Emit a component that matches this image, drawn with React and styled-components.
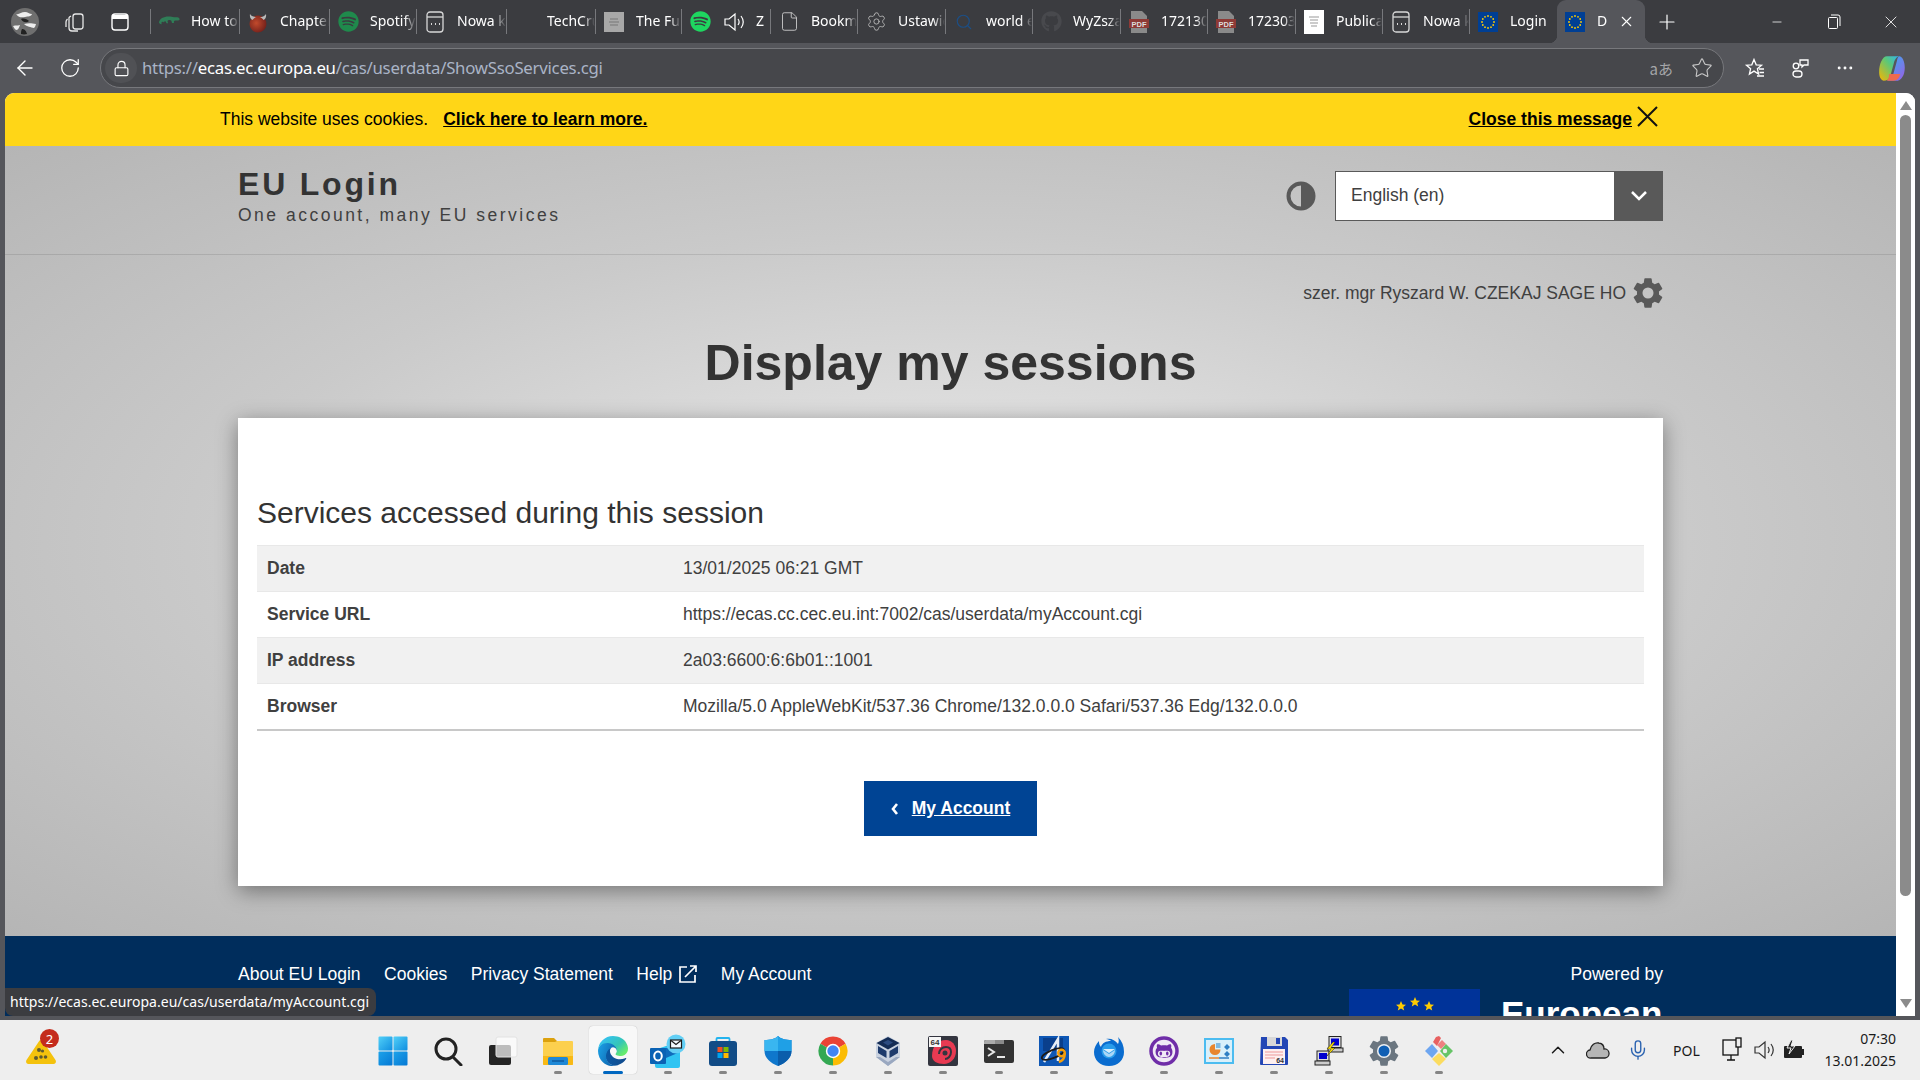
import React from 'react';
import styled, { createGlobalStyle } from 'styled-components';
import { FaSpotify, FaGithub, FaGithubAlt } from 'react-icons/fa';
import {
  ArrowLeft, RotateCw, Lock, Star, Plus, X, Minus, Search, Settings, File, ChevronUp, Mic, Ellipsis,
} from 'lucide-react';

const GlobalStyle = createGlobalStyle`
  html, body {
    margin: 0;
    padding: 0;
    height: 100%;
    overflow: hidden;
  }
  body {
    font-family: "Liberation Sans", Arial, sans-serif;
  }
  #root {
    height: 100%;
  }
  * {
    box-sizing: border-box;
  }
`;

const Screen = styled.div`
  width: 1920px;
  height: 1080px;
  display: flex;
  flex-direction: column;
  background: #55565b;
  overflow: hidden;
`;

/* browser chrome */
const TabStrip = styled.div`
  height: 43px;
  flex: none;
  display: flex;
  align-items: stretch;
  background: #3b3c40;
  color: #fff;
  font-family: "Noto Sans", sans-serif;
  font-size: 14px;
`;

const StripButton = styled.div`
  width: ${(p) => p.$w}px;
  flex: none;
  display: flex;
  align-items: center;
  justify-content: center;
`;

const TabList = styled.div`
  display: flex;
  margin-left: 10px;
`;

const Tab = styled.div`
  width: ${(p) => p.$w}px;
  flex: none;
  display: flex;
  align-items: center;
  padding-left: 7px;
  margin: 9px 0;
  height: 25px;
  border-left: 1px solid #77787c;
`;

const ActiveTab = styled.div`
  width: 88px;
  height: 43px;
  flex: none;
  position: relative;
  display: flex;
  align-items: center;
  padding-left: 7px;
  background: #55565b;
  border-radius: 9px 9px 0 0;
  &::before,
  &::after {
    content: "";
    position: absolute;
    bottom: 0;
    width: 8px;
    height: 8px;
  }
  &::before {
    left: -8px;
    background: radial-gradient(circle at 0 0, transparent 8px, #55565b 8.5px);
  }
  &::after {
    right: -8px;
    background: radial-gradient(circle at 100% 0, transparent 8px, #55565b 8.5px);
  }
`;

const TabClose = styled(X)`
  margin-right: 10px;
`;

const TabIcon = styled.span`
  width: 22px;
  height: 24px;
  flex: none;
  display: flex;
  align-items: center;
  justify-content: center;
`;

const TabAudio = styled.span`
  margin-left: 12px;
  display: flex;
  flex: none;
`;

const TabLabel = styled.span`
  margin: -3px 0 0 11px;
  flex: 1;
  min-width: 0;
  white-space: nowrap;
  overflow: hidden;
  mask-image: linear-gradient(to right, #000 75%, transparent 100%);
`;

const StripEnd = styled.div`
  margin-left: auto;
  display: flex;
  align-items: center;
  padding-right: 1px;
`;

const WindowButton = styled.div`
  width: 57px;
  display: flex;
  align-items: center;
  justify-content: center;
`;

const Toolbar = styled.div`
  height: 50px;
  flex: none;
  display: flex;
  align-items: center;
  padding-left: 2px;
  color: #fff;
`;

const ToolButton = styled.div`
  width: ${(p) => p.$w || 45}px;
  height: 36px;
  flex: none;
  display: flex;
  align-items: center;
  justify-content: center;
`;

const AddressBar = styled.div`
  flex: none;
  margin-left: 8px;
  width: 1624px;
  height: 40px;
  display: flex;
  align-items: center;
  border: 1px solid #77787c;
  border-radius: 20px;
  background: #46474b;
  padding: 0 10px 0 4px;
`;

const LockBox = styled.div`
  width: 32px;
  height: 30px;
  margin-right: 5px;
  border-radius: 15px;
  background: #505155;
  display: flex;
  align-items: center;
  justify-content: center;
`;

const Url = styled.div`
  flex: 1;
  margin-top: -2px;
  font-family: "Noto Sans", sans-serif;
  font-size: 16.8px;
  letter-spacing: -0.25px;
  color: #aab4c6;
  strong {
    font-weight: 400;
    color: #fff;
  }
`;

const Translate = styled.span`
  font-family: "Noto Sans CJK JP", "Noto Sans", sans-serif;
  font-size: 15px;
  color: #a5a6a9;
  margin-right: 18px;
`;

const ToolRight = styled.div`
  display: flex;
  align-items: center;
  margin-left: 8px;
`;

/* page viewport */
const Viewport = styled.div`
  flex: 1;
  min-height: 0;
  margin: 0 5px 4px;
  display: flex;
  border-radius: 9px 9px 0 0;
  overflow: hidden;
  position: relative;
  background: #fff;
`;

const Page = styled.div`
  flex: 1;
  min-width: 0;
  overflow: hidden;
  display: flex;
  flex-direction: column;
  color: #333;
`;

const CookieBanner = styled.div`
  height: 53px;
  flex: none;
  background: #ffd617;
  color: #000;
  font-size: 17.5px;
  display: flex;
  align-items: center;
  padding: 0 238px 0 215px;
  a {
    color: #000;
    font-weight: 700;
    text-decoration: underline;
  }
`;

const CookieText = styled.span`
  margin-right: 15px;
`;

const CloseMessage = styled.div`
  margin-left: auto;
  display: flex;
  align-items: center;
  gap: 5px;
`;

const CloseCross = styled.svg`
  margin-top: -7px;
`;

const Main = styled.main`
  height: 790px;
  flex: none;
  background: radial-gradient(ellipse at center, #e4e4e4 0%, #dcdcdc 25%, #cacaca 55%, #c2c2c2 72%, #b5b5b5 100%);
`;

const SiteHeader = styled.header`
  height: 109px;
  border-bottom: 1px solid rgba(0, 0, 0, 0.1);
`;

const Container = styled.div`
  width: 1425px;
  margin: 0 auto;
`;

const HeaderRow = styled(Container)`
  display: flex;
  align-items: flex-start;
  justify-content: space-between;
  padding-top: 25px;
`;

const Brand = styled.div`
  display: flex;
  flex-direction: column;
  margin-top: -3px;
`;

const BrandName = styled.div`
  font-size: 32px;
  line-height: 32px;
  font-weight: 700;
  letter-spacing: 2.8px;
`;

const BrandTag = styled.div`
  font-size: 17.5px;
  line-height: 22px;
  margin-top: 4px;
  letter-spacing: 2.5px;
  color: #404040;
`;

const LangGroup = styled.div`
  display: flex;
  align-items: center;
  gap: 19px;
`;

const LangSelect = styled.div`
  width: 328px;
  height: 50px;
  display: flex;
  align-items: center;
  background: #fff;
  border: 1px solid #595959;
  font-size: 17.5px;
  color: #404040;
  padding: 0 0 1px 15px;
`;

const LangArrow = styled.div`
  width: 49px;
  height: 50px;
  margin: 0 -1px 0 auto;
  background: #595959;
  display: flex;
  align-items: center;
  justify-content: center;
`;

const UserRow = styled(Container)`
  display: flex;
  justify-content: flex-end;
  align-items: center;
  gap: 7px;
  padding-top: 23px;
  font-size: 17.5px;
  color: #404040;
`;

const PageTitle = styled.h1`
  margin: 22px 0 0;
  font-size: 50px;
  line-height: 66px;
  font-weight: 700;
  text-align: center;
  color: #333;
`;

const Card = styled(Container)`
  margin-top: 22px;
  height: 468px;
  background: #fff;
  box-shadow: 0 5px 20px rgba(0, 0, 0, 0.4);
  padding: 75px 19px 0;
`;

const CardHeading = styled.h2`
  margin: 0;
  font-size: 30px;
  line-height: 40px;
  font-weight: 400;
  color: #333;
`;

const InfoTable = styled.div`
  margin-top: 12px;
  border-bottom: 2px solid #c8c8c8;
  font-size: 17.5px;
`;

const InfoRow = styled.div`
  height: 46px;
  display: grid;
  grid-template-columns: 416px 1fr;
  align-items: center;
  padding-left: 10px;
  background: ${(p) => (p.$shaded ? '#f1f1f1' : '#fff')};
  border-top: 1px solid #e8e8e8;
  color: #404040;
`;

const InfoLabel = styled.div`
  font-weight: 700;
`;

const ButtonRow = styled.div`
  display: flex;
  justify-content: center;
  margin-top: 50px;
`;

const BackButton = styled.a`
  width: 173px;
  height: 55px;
  display: flex;
  align-items: center;
  justify-content: center;
  gap: 13px;
  background: #004494;
  color: #fff;
  font-size: 17.5px;
  font-weight: 700;
  span {
    text-decoration: underline;
  }
`;

const Footer = styled.footer`
  flex: 1;
  background: #002d5c;
  color: #fff;
  font-size: 17.5px;
  position: relative;
`;

const FooterRow = styled(Container)`
  display: flex;
  justify-content: space-between;
  padding-top: 26px;
`;

const FooterLinks = styled.nav`
  display: flex;
  gap: 23.5px;
  height: 24px;
  align-items: center;
`;

const FooterLink = styled.span`
  display: flex;
  align-items: center;
  gap: 7px;
`;

const PoweredBy = styled.div`
  display: flex;
  flex-direction: column;
  align-items: flex-end;
`;

const PoweredLabel = styled.div`
  line-height: 24px;
`;

const Commission = styled.div`
  display: flex;
  margin-top: 3px;
  gap: 21px;
  width: 314px;
`;

const Flag = styled.div`
  width: 131px;
  height: 88px;
  flex: none;
  background: #003399;
  display: flex;
  justify-content: center;
`;

const CommissionName = styled.div`
  font-size: 35px;
  line-height: 40px;
  font-weight: 700;
  padding-top: 5px;
`;

const FooterRule = styled.div`
  position: absolute;
  left: 0;
  bottom: 1px;
  width: 1171px;
  height: 1px;
  background: #3c5f8a;
`;

const StatusBubble = styled.div`
  position: absolute;
  left: 0;
  bottom: 0;
  height: 28px;
  width: 371px;
  background: #3b3c40;
  border-radius: 0 8px 8px 8px;
  color: #fff;
  font-family: "Noto Sans", sans-serif;
  font-size: 14px;
  letter-spacing: 0.02px;
  display: flex;
  align-items: center;
  padding: 0 0 2px 5px;
  white-space: nowrap;
`;

const Scrollbar = styled.div`
  width: 19px;
  flex: none;
  background: #fff;
  display: flex;
  flex-direction: column;
  align-items: center;
  padding: 8px 0;
`;

const ScrollThumb = styled.div`
  width: 11px;
  height: 781px;
  margin: 5px 0 auto;
  border-radius: 6px;
  background: #8b8b8b;
`;

/* taskbar */
const Taskbar = styled.div`
  height: 60px;
  flex: none;
  position: relative;
  display: flex;
  align-items: center;
  background: #eeeeee;
  color: #1a1a1a;
`;

const Weather = styled.div`
  position: absolute;
  left: 26px;
  top: 9px;
  width: 34px;
  height: 36px;
  padding-top: 11px;
`;

const Badge = styled.div`
  position: absolute;
  left: 14px;
  top: 0;
  width: 19px;
  height: 19px;
  border-radius: 50%;
  background: #c42b1c;
  color: #fff;
  font-family: "Noto Sans", sans-serif;
  font-size: 13px;
  display: flex;
  align-items: center;
  justify-content: center;
`;

const AppIcons = styled.div`
  margin-left: 365px;
  display: flex;
`;

const AppSlot = styled.div`
  width: 55.1px;
  height: 60px;
  flex: none;
  position: relative;
  display: flex;
  align-items: center;
  justify-content: center;
  padding-top: 1px;
  ${(p) => (p.$active
    ? `&::before {
        content: "";
        position: absolute;
        left: 4px;
        right: 3px;
        top: 6px;
        bottom: 6px;
        background: #f8f8f8;
        border-radius: 4px;
        box-shadow: 0 0 1px rgba(0, 0, 0, 0.3);
      }`
    : '')}
  svg {
    position: relative;
  }
`;

const RunDot = styled.span`
  position: absolute;
  bottom: 6px;
  left: 50%;
  width: ${(p) => (p.$active ? 20 : 8)}px;
  height: 3px;
  margin-left: ${(p) => (p.$active ? -10 : -4)}px;
  border-radius: 2px;
  background: ${(p) => (p.$active ? '#0067c0' : '#858585')};
`;

const Tray = styled.div`
  margin-left: auto;
  display: flex;
  align-items: center;
  padding-right: 24px;
`;

const TrayIcon = styled.div`
  width: ${(p) => p.$w || 40}px;
  display: flex;
  align-items: center;
  justify-content: center;
`;

const TrayText = styled.div`
  font-family: "Noto Sans", sans-serif;
  font-size: 14px;
  width: 56px;
  text-align: center;
`;

const Clock = styled.div`
  margin-left: 12px;
  font-family: "Noto Sans", sans-serif;
  font-size: 14px;
  line-height: 22px;
  text-align: right;
`;

/* drawn icons */
function EuFlag({ size = 20 }) {
  const stars = Array.from({ length: 12 }, (_, i) => {
    const a = (i * Math.PI) / 6;
    return <circle key={i} cx={10 + 6 * Math.cos(a)} cy={10 + 6 * Math.sin(a)} r="0.9" fill="#ffcc00" />;
  });
  return (
    <svg width={size} height={size} viewBox="0 0 20 20">
      <rect width="20" height="20" fill="#003f94" />
      {stars}
    </svg>
  );
}

function PdfIcon() {
  return (
    <svg width="20" height="24" viewBox="0 0 20 24">
      <path d="M2 1h11l5 5v17H2z" fill="#8a8a8a" />
      <rect x="0" y="9" width="20" height="9" fill="#8e3a36" />
      <text x="10" y="16.5" fontSize="7.5" fontWeight="700" fill="#ddd" textAnchor="middle" fontFamily="Liberation Sans">PDF</text>
    </svg>
  );
}

function TabPage() {
  return (
    <svg width="20" height="24" viewBox="0 0 20 24" fill="none" stroke="#d8d8d8" strokeWidth="1.3">
      <rect x="2" y="2" width="16" height="20" rx="3" />
      <path d="M2 7h16" />
      <path d="M6 14h1M10 14h1M14 14h1" strokeWidth="2" />
    </svg>
  );
}

function Gecko() {
  return (
    <svg width="22" height="13" viewBox="0 0 22 13" fill="#2f7d57">
      <path d="M1 8C1 3 7 1 12 1.500c2.500.3 4 1 6 .8 1.500-.1 3 .3 3.500 1.500.3.900-.3 1.700-1.300 1.700h-3c-1.200 0-1.500 1-1.200 2.500h-2c-.4-1.500-.4-2.500-1.500-2.800-1.300-.3-2.500 0-3 1 .3 1 .4 1.500.6 2H8.500c-.5-1-.8-1.800-1.500-2.200-.8.500-1 2-2 2.800-2 1.200-4-.1-4-1.800z" />
      <circle cx="4.700" cy="8" r="1.300" fill="#3b3c40" />
    </svg>
  );
}

function RedBall() {
  return (
    <svg width="20" height="24" viewBox="0 0 20 24">
      <defs>
        <radialGradient id="bsdBall" cx="0.4" cy="0.45" r="0.65">
          <stop offset="0" stopColor="#c24a2c" />
          <stop offset="1" stopColor="#6e1e1a" />
        </radialGradient>
      </defs>
      <circle cx="10" cy="14" r="8.500" fill="url(#bsdBall)" />
      <path d="M2 4c-.5 3 .5 5 2.500 6 1-1.500 2-2.300 4-3C6 7 3.500 6.500 2 4zM18 4c.5 3-.5 5-2.500 6-1-1.500-2-2.300-4-3 2.500 0 5-.5 6.500-3z" fill="#b9b9b9" />
    </svg>
  );
}

function WhiteDoc() {
  return (
    <svg width="20" height="24" viewBox="0 0 20 24">
      <rect width="20" height="24" fill="#fff" />
      <path d="M5 7h10M6 10h8M6 13h8M7 16h6" stroke="#999" />
    </svg>
  );
}

function GreySquare() {
  return (
    <svg width="20" height="20" viewBox="0 0 20 20">
      <rect width="20" height="20" fill="#a8a8a8" />
      <path d="M6 7h8M5 10h10M6 13h8" stroke="#777" />
    </svg>
  );
}

function SpeakerOutline({ color = '#fff', size = 22 }) {
  return (
    <svg width={size} height={size} viewBox="0 0 22 22" fill="none" stroke={color} strokeWidth="1.2">
      <path d="M2 8h4l6-5v16l-6-5H2z" />
      <path d="M15 8c1.500 2 1.500 4 0 6M18 5c3 4 3 8 0 12" />
    </svg>
  );
}

function CollectionsIcon() {
  return (
    <svg width="22" height="22" viewBox="0 0 22 22" fill="none" stroke="#e6e6e6" strokeWidth="1.3">
      <rect x="9" y="3" width="10" height="15" rx="2.500" />
      <path d="M7 5 5.500 6A2 2 0 0 0 5 8v9a3 3 0 0 0 3 3h6" />
      <path d="M3.500 8C2.500 9 2 10 2 11v5" />
    </svg>
  );
}

function SidebarIcon() {
  return (
    <svg width="20" height="20" viewBox="0 0 20 20" fill="none" stroke="#fff" strokeWidth="1.4">
      <rect x="2" y="2" width="16" height="16" rx="3" />
      <path d="M2 5h16" strokeWidth="4" />
    </svg>
  );
}

function Avatar() {
  return (
    <svg width="30" height="32" viewBox="0 0 30 32">
      <circle cx="15" cy="16" r="14" fill="#6f6f6f" />
      <path d="M6 8c3 1 5-2 9-2 3 0 4 2 7 2-1 3-4 2-7 3-3 .5-6 1-9-3zM3 20c3-1 4 0 7-1-1 3-2 5-4 5-1-1-2-2-3-4zM14 18c4-1 7-1 12 0-.5 2-1 3-2 4-3-1-7-1-10-4z" fill="#ededed" />
      <path d="M11 13c3-1 6 0 8 2-2 2-6 2-8-2zM12 23c2 0 4 1 5 5-2 .5-4 .5-6 0 0-2 0-3 1-5z" fill="#222" />
    </svg>
  );
}

function CopilotIcon() {
  return (
    <svg width="29" height="29" viewBox="0 0 26 26">
      <defs>
        <linearGradient id="copA" x1="0" y1="0" x2="1" y2="1">
          <stop offset="0" stopColor="#2fb4f0" />
          <stop offset="1" stopColor="#9b5de5" />
        </linearGradient>
        <linearGradient id="copB" x1="0" y1="1" x2="1" y2="0">
          <stop offset="0" stopColor="#f7b500" />
          <stop offset="0.6" stopColor="#5bc878" />
          <stop offset="1" stopColor="#2fb4f0" />
        </linearGradient>
      </defs>
      <path d="M8 2h11c-3 1-4 3-5 7l-3 11c-1 3-3 4-6 4-3-1-4-4-4-8C1 9 4 2 8 2z" fill="url(#copB)" />
      <path d="M19 2c3 0 5 5 5 10 0 7-3 12-8 12H8c3-1 5-3 6-7l3-11c.4-2 1-4 2-4z" fill="url(#copA)" />
      <path d="M10 18h10c-1 4-3 6-6 6H8c1-1 2-3 2-6z" fill="#ee6a4d" />
    </svg>
  );
}

function FavoritesIcon() {
  return (
    <svg width="22" height="22" viewBox="0 0 22 22" fill="none" stroke="#fff" strokeWidth="1.3">
      <path d="M10 2.500l2.200 5.300 5.300.4-4.100 3.500 1.200 5.300-4.600-2.900-4.600 2.900 1.200-5.300L2.500 8.200l5.300-.4z" />
      <path d="M15 12h5M15.500 15.500h4.500M13 19h7" />
    </svg>
  );
}

function ShareIcon() {
  return (
    <svg width="22" height="22" viewBox="0 0 22 22" fill="none" stroke="#fff" strokeWidth="1.3">
      <rect x="4" y="14" width="9" height="6" rx="3" />
      <circle cx="7" cy="9" r="2.800" />
      <path d="M11 3h8v5h-4l-2 2V8h-2z" />
    </svg>
  );
}

function ContrastIcon() {
  return (
    <svg width="30" height="30" viewBox="0 0 30 30">
      <circle cx="15" cy="15" r="12.500" fill="none" stroke="#595959" strokeWidth="4" />
      <path d="M15 2.500a12.500 12.500 0 0 1 0 25z" fill="#595959" />
    </svg>
  );
}

const gearPath = 'M19.140 12.940c.04-.3.060-.61.060-.94 0-.32-.02-.64-.07-.94l2.030-1.580a.49.49 0 0 0 .12-.61l-1.920-3.320a.49.49 0 0 0-.59-.22l-2.390.96a7 7 0 0 0-1.620-.94l-.36-2.540a.48.48 0 0 0-.48-.41h-3.840a.47.47 0 0 0-.47.41l-.36 2.540c-.59.24-1.130.57-1.620.94l-2.390-.96a.48.48 0 0 0-.59.22L2.740 8.870a.47.47 0 0 0 .12.61l2.030 1.580c-.05.3-.09.63-.09.94s.02.64.07.94l-2.030 1.580a.49.49 0 0 0-.12.61l1.920 3.320c.12.22.37.29.59.22l2.390-.96c.5.380 1.030.7 1.620.94l.36 2.540c.05.24.24.41.48.41h3.840c.24 0 .44-.17.47-.41l.36-2.540c.59-.24 1.130-.56 1.620-.94l2.390.96c.22.08.47 0 .59-.22l1.920-3.320a.47.47 0 0 0-.12-.61z';

function GearIcon() {
  return (
    <svg width="30" height="30" viewBox="2.4 2.2 19.2 19.6" fill="#595959">
      <path fillRule="evenodd" d={`${gearPath}M12 15.600a3.600 3.600 0 1 1 0-7.200 3.600 3.600 0 0 1 0 7.200z`} />
    </svg>
  );
}

function ExternalIcon() {
  return (
    <svg width="18" height="18" viewBox="0 0 18 18" fill="none" stroke="#fff" strokeWidth="1.7">
      <path d="M8 2H1v15h15v-7" />
      <path d="M6 12 16.500 1.500M11 1h6v6" />
    </svg>
  );
}

function FlagStars() {
  const star = 'l1.500 3.500 3.500.3-2.700 2.200.9 3.500-3.200-1.900-3.200 1.900.9-3.500-2.700-2.200 3.500-.3z';
  return (
    <svg width="60" height="30" viewBox="0 0 60 30" fill="#ffcc00">
      <path d={`M16 12${star}`} />
      <path d={`M30 8${star}`} />
      <path d={`M44 12${star}`} />
    </svg>
  );
}

function WeatherIcon() {
  return (
    <svg width="30" height="24" viewBox="0 0 30 24">
      <path d="M15 0c.8 0 1.400.4 1.800 1.100L29.500 20c1 1.700.2 4-2 4h-25c-2.200 0-3-2.300-2-4L13.200 1.100C13.600.4 14.200 0 15 0z" fill="#f4c20d" />
      <g fill="#5e5a30">
        <circle cx="13" cy="10" r="2" />
        <circle cx="16.500" cy="11" r="1.600" />
        <circle cx="10" cy="18" r="2" />
        <circle cx="15" cy="17" r="1.800" />
        <circle cx="19.500" cy="17" r="1.800" />
      </g>
    </svg>
  );
}

const S = 30;

function StartIcon() {
  return (
    <svg width={S} height={S} viewBox="0 0 30 30">
      <defs>
        <linearGradient id="winA" x1="0" y1="0" x2="1" y2="1">
          <stop offset="0" stopColor="#52d0f8" />
          <stop offset="1" stopColor="#0f8ee0" />
        </linearGradient>
        <linearGradient id="winB" x1="0" y1="0" x2="1" y2="1">
          <stop offset="0" stopColor="#1da3ea" />
          <stop offset="1" stopColor="#0578d4" />
        </linearGradient>
      </defs>
      <rect x="0.500" y="0.500" width="14" height="14" rx="1" fill="url(#winA)" />
      <rect x="15.500" y="0.500" width="14" height="14" rx="1" fill="url(#winA)" />
      <rect x="0.500" y="15.500" width="14" height="14" rx="1" fill="url(#winB)" />
      <rect x="15.500" y="15.500" width="14" height="14" rx="1" fill="url(#winB)" />
    </svg>
  );
}

function SearchIcon() {
  return (
    <svg width={S} height={S} viewBox="0 0 30 30" fill="none" stroke="#222" strokeWidth="3">
      <circle cx="13" cy="13" r="10" />
      <path d="M21 22l7 7" strokeLinecap="round" />
    </svg>
  );
}

function TaskViewIcon() {
  return (
    <svg width={S} height={S} viewBox="0 0 30 30">
      <rect x="1" y="9" width="22" height="20" rx="2" fill="#242424" />
      <rect x="8" y="1" width="21" height="20" rx="2" fill="#fff" fillOpacity="0.7" stroke="#e2e2e2" />
    </svg>
  );
}

function FolderIcon() {
  return (
    <svg width={S} height={S} viewBox="0 0 30 30">
      <path d="M0 3a1 1 0 0 1 1-1h10l3 3h15v8H0z" fill="#dca10e" />
      <path d="M0 6h12l2-1h15a1 1 0 0 1 1 1v22a1 1 0 0 1-1 1H1a1 1 0 0 1-1-1z" fill="#fcd04e" />
      <path d="M0 20h30v8a1 1 0 0 1-1 1H1a1 1 0 0 1-1-1z" fill="#f8b916" />
      <rect x="5" y="21" width="20" height="8" rx="1.500" fill="#1e88d6" />
      <path d="M9 25h12" stroke="#0b4f92" strokeWidth="1.200" />
    </svg>
  );
}

function EdgeIcon() {
  return (
    <svg width={S} height={S} viewBox="-1 0 257 256">
      <defs>
        <linearGradient id="edgeA" x1="0" y1="0.5" x2="1" y2="0.5">
          <stop offset="0" stopColor="#0c59a4" />
          <stop offset="1" stopColor="#114a8b" />
        </linearGradient>
        <linearGradient id="edgeB" x1="0" y1="0.3" x2="1" y2="0.8">
          <stop offset="0" stopColor="#1b9de2" />
          <stop offset="1" stopColor="#0c59a4" />
        </linearGradient>
        <linearGradient id="edgeC" x1="0.1" y1="0.2" x2="0.9" y2="0.8">
          <stop offset="0" stopColor="#35c1f1" />
          <stop offset="0.6" stopColor="#34c6b6" />
          <stop offset="1" stopColor="#66eb6e" />
        </linearGradient>
      </defs>
      <path d="M235.69 188.28c-3.4 1.78-6.9 3.34-10.5 4.68a101.5 101.5 0 0 1-35.73 6.44c-47.1 0-88.13-32.4-88.13-73.97a31.33 31.33 0 0 1 16.35-27.18c-42.6 1.79-53.55 46.18-53.55 72.19 0 73.54 67.78 81 82.38 81 7.87 0 19.74-2.29 26.86-4.54l1.3-.44a127.71 127.71 0 0 0 66.28-52.54 4 4 0 0 0-5.26-5.64Z" fill="url(#edgeA)" />
      <path d="M105.73 241.42a79.03 79.03 0 0 1-22.68-21.29 80.49 80.49 0 0 1 29.44-119.65c3.14-1.48 8.5-4.16 15.64-4.03a32.53 32.53 0 0 1 25.84 13.08 32.07 32.07 0 0 1 6.38 18.75c0-.21 24.63-80.16-80.56-80.16-44.21 0-80.56 41.95-80.56 78.75a131.06 131.06 0 0 0 12.19 56.39 128.86 128.86 0 0 0 157.45 67.55 76.01 76.01 0 0 1-63.14-9.39Z" fill="url(#edgeB)" />
      <path d="M152.33 148.83c-.82 1.06-3.33 2.53-3.33 5.71 0 2.63 1.71 5.16 4.75 7.28 14.47 10.06 41.74 8.73 41.81 8.73a59.93 59.93 0 0 0 30.47-8.4A61.63 61.63 0 0 0 256 109.09c.26-22.54-8.05-37.53-11.41-44.17C223.27 23.23 177.25 0 127.21 0A128 128 0 0 0-.78 126.2c.48-36.79 37.05-66.5 80.56-66.5 3.52 0 23.63.34 42.3 10.14 16.46 8.64 25.08 19.08 31.08 29.42 6.22 10.75 7.33 24.33 7.33 29.74 0 5.41-2.76 13.43-7.86 20.16Z" fill="url(#edgeC)" />
    </svg>
  );
}

function OutlookIcon() {
  return (
    <svg width="36" height="34" viewBox="0 0 36 34">
      <path d="M4 16 22 10l8 6v16a2 2 0 0 1-2 2H7a2 2 0 0 1-2-2z" fill="#30c4f2" />
      <path d="M14 14h12l4 4-14 6z" fill="#0f6cbd" />
      <circle cx="26" cy="10" r="9.500" fill="#62cff5" />
      <rect x="20.500" y="6" width="11" height="8" fill="#f4fbff" stroke="#1b1b1b" strokeWidth="1.200" />
      <path d="M21 6.500l5 4 5-4" fill="none" stroke="#1b1b1b" strokeWidth="1.200" />
      <rect x="0" y="14" width="16" height="16" rx="1" fill="#0a62b4" />
      <ellipse cx="8" cy="22" rx="3.800" ry="4.500" fill="none" stroke="#fff" strokeWidth="2" />
    </svg>
  );
}

function StoreIcon() {
  return (
    <svg width={S} height={S} viewBox="0 0 30 30">
      <path d="M8.500 7V3a1 1 0 0 1 1-1h11a1 1 0 0 1 1 1v4" fill="none" stroke="#23b3ee" strokeWidth="1.800" />
      <rect x="1" y="5" width="28" height="25" rx="3" fill="#124c86" />
      <rect x="9.500" y="11" width="5" height="5" fill="#f25022" />
      <rect x="15.500" y="11" width="5" height="5" fill="#7fba00" />
      <rect x="9.500" y="17" width="5" height="5" fill="#00a4ef" />
      <rect x="15.500" y="17" width="5" height="5" fill="#ffb900" />
    </svg>
  );
}

function ShieldIcon() {
  return (
    <svg width={S} height={S} viewBox="0 0 30 30">
      <path d="M15 0c3 3 8 4 13.500 4v11c0 7-6 12-13.500 15C7.500 27 1.500 22 1.500 15V4C7 4 12 3 15 0z" fill="#0f77cc" />
      <path d="M15 0c3 3 8 4 13.500 4v11H15z" fill="#1fa0e6" />
      <path d="M15 0C12 3 7 4 1.500 4v11H15z" fill="#39b6f0" />
      <path d="M15 15h13.500c0 7-6 12-13.500 15z" fill="#0a5dab" />
    </svg>
  );
}

function ChromeIcon() {
  return (
    <svg width={S} height={S} viewBox="0 0 30 30">
      <path d="M15 15 2.440 7.750A14.500 14.500 0 0 1 27.560 7.750z" fill="#ea4335" />
      <path d="M15 15 27.560 7.750A14.500 14.500 0 0 1 15 29.500z" fill="#fbbc04" />
      <path d="M15 15V29.500A14.500 14.500 0 0 1 2.440 7.750z" fill="#34a853" />
      <circle cx="15" cy="15" r="7.200" fill="#fff" />
      <circle cx="15" cy="15" r="5.700" fill="#4285f4" />
    </svg>
  );
}

function BoxIcon() {
  return (
    <svg width={S} height={S} viewBox="0 0 30 30">
      <path d="M15 0 27 7v14l-12 9L3 21V7z" fill="#c9d2e0" />
      <path d="M15 1 26.500 7 15 13.500 3.500 7z" fill="#142c55" />
      <path d="M5 10l8.500 5v7L5 17zM25 10l-8.500 5v7L25 17z" fill="#1d3a6c" />
      <path d="M10 6.500 15 4l5 2.500L15 9.500z" fill="#2c4b80" />
      <path d="M3 21l12 9 12-9-4 0-8 5-8-5z" fill="#9aa8c0" />
    </svg>
  );
}

function RubyIcon() {
  return (
    <svg width={S} height={S} viewBox="0 0 30 30">
      <rect width="30" height="30" rx="2" fill="#33353f" />
      <path d="M4 20C4 10 10 4 18 4c6 0 10 5 10 11 0 8-6 13-12 13C9 28 4 25 4 20z" fill="#e83a52" />
      <path d="M11 18c0-4 3-7 7-7 3 0 5 2 5 5 0 4-3 7-6 7" fill="none" stroke="#33353f" strokeWidth="2" />
      <circle cx="17" cy="17" r="2.500" fill="#33353f" />
      <rect x="1" y="1" width="12" height="10" fill="#f5f5f5" />
      <text x="2.500" y="9" fontSize="8" fontWeight="700" fill="#333" fontFamily="Liberation Sans">64</text>
    </svg>
  );
}

function TerminalIcon() {
  return (
    <svg width={S} height={S} viewBox="0 0 30 30">
      <rect y="4" width="30" height="23" rx="2" fill="#333" />
      <path d="M0 6a2 2 0 0 1 2-2h9v4H0z" fill="#aaa" />
      <path d="M11 4h9v4h-9z" fill="#8a8a8a" />
      <path d="M4 12l6 4-6 4" fill="none" stroke="#e8e8e8" strokeWidth="2" />
      <path d="M13 21h8" stroke="#e8e8e8" strokeWidth="2" />
    </svg>
  );
}

function AstroIcon() {
  return (
    <svg width={S} height={S} viewBox="0 0 30 30">
      <rect width="30" height="30" fill="#0e57b5" />
      <rect x="4" y="2" width="20" height="13" fill="#0a3f8c" />
      <path d="M5 26 19 3v22" fill="none" stroke="#e8eef6" strokeWidth="2.500" />
      <ellipse cx="14" cy="18" rx="12" ry="4" transform="rotate(-22 14 18)" fill="none" stroke="#1b1b1b" strokeWidth="1.800" />
      <circle cx="22.500" cy="17" r="3.300" fill="none" stroke="#f59e0b" strokeWidth="2.400" />
      <path d="M25.800 17c0 5-2 8-6 9" fill="none" stroke="#f59e0b" strokeWidth="2.400" />
    </svg>
  );
}

function ThunderbirdIcon() {
  return (
    <svg width={S} height={S} viewBox="0 0 30 30">
      <path d="M5 5c-3 3-5 7-5 11 0 8 6 14 15 14s15-6 15-14c0-6-2-11-6-15 1 3 1 5 0 7-3-4-7-6-12-5 2 0 4 1 5 2-5 0-9 2-10 6-2-2-2-4-2-6z" fill="#0a6ccf" />
      <circle cx="15" cy="15" r="7.500" fill="#2a9cea" />
      <path d="M9 13h12l-6 4z" fill="#d9eefc" />
      <path d="M9 14l6 4 6-4c0 4-3 7-6 7s-6-3-6-7z" fill="#a9d6f7" />
    </svg>
  );
}

function GithubAppIcon() {
  return (
    <svg width={S} height={S} viewBox="0 0 30 30">
      <circle cx="15" cy="15" r="13" fill="#f0eaf5" stroke="#6f2da8" strokeWidth="3.500" />
      <FaGithubAlt x={6} y={6} size={18} color="#6f2da8" />
    </svg>
  );
}

function ChartIcon() {
  return (
    <svg width={S} height={S} viewBox="0 0 30 30">
      <rect y="2" width="30" height="26" fill="#4cbcf0" />
      <rect x="2" y="4" width="26" height="22" fill="#d9f0fb" />
      <path d="M11 8a5.500 5.500 0 1 0 5.500 5.500H11z" fill="#e8862f" />
      <path d="M12 7h4.500v5H12z" fill="#7fb9e2" />
      <path d="M20 11l3-3 3 3-3 3zM20 18l3-3 3 3-3 3z" fill="#2f7fc4" />
      <path d="M5 22h10" stroke="#e8862f" strokeWidth="1.500" />
      <path d="M15 22h10" stroke="#2f7fc4" strokeWidth="1.500" />
    </svg>
  );
}

function FloppyIcon() {
  return (
    <svg width={S} height={S} viewBox="0 0 30 30">
      <path d="M2 1h24l3 3v24a1 1 0 0 1-1 1H2a1 1 0 0 1-1-1z" fill="#2346b5" />
      <rect x="8" y="1" width="15" height="9" fill="#d8d8d8" />
      <rect x="17" y="2" width="4" height="6" fill="#2346b5" />
      <rect x="4" y="13" width="22" height="15" fill="#fdf0f0" />
      <path d="M6 16h18M6 19h18M6 22h10" stroke="#e99" />
      <text x="25" y="27" fontSize="7" fontWeight="700" textAnchor="end" fill="#333" fontFamily="Liberation Sans">64</text>
    </svg>
  );
}

function NetworkIcon() {
  return (
    <svg width={S} height={S} viewBox="0 0 30 30">
      <rect x="15" y="0.500" width="12" height="11" fill="#ddd" stroke="#222" />
      <rect x="17" y="2.500" width="8" height="7" fill="#0000d0" />
      <rect x="14" y="12" width="15" height="4" fill="#ccc" stroke="#222" />
      <rect x="3" y="15" width="12" height="10" fill="#ddd" stroke="#222" />
      <rect x="5" y="17" width="8" height="6" fill="#0000d0" />
      <rect x="1" y="25" width="15" height="4" fill="#ccc" stroke="#222" />
      <path d="M19 6l-6 7h4l-4 7 8-8h-4l4-6z" fill="#ffe000" stroke="#222" strokeWidth="0.500" />
    </svg>
  );
}

function SysGearIcon() {
  return (
    <svg width={S} height={S} viewBox="2.4 2.2 19.2 19.6" fill="#6b7680">
      <path d={gearPath} />
      <circle cx="12" cy="12" r="4.600" fill="#eceff2" />
      <circle cx="12" cy="12" r="3.600" fill="#0f5fb4" />
    </svg>
  );
}

function GemsIcon() {
  return (
    <svg width={S} height={S} viewBox="0 0 30 30">
      <path d="M15 0l2 2-4 8-4-4 3-5z" fill="#e86060" />
      <path d="M18 4l4 4-5 5-4-4z" fill="#ee8080" />
      <path d="M8 8l6 7-6 7-7-7z" fill="#6ea6f0" />
      <path d="M22 8l7 7-7 7-6-7z" fill="#66c466" />
      <circle cx="21" cy="15" r="2.200" fill="#eee" />
      <path d="M15 17l7 6-7 7-7-7z" fill="#fbdc60" />
    </svg>
  );
}

function CloudTray() {
  return (
    <svg width="24" height="22" viewBox="0 0 24 22">
      <path d="M5 19a4 4 0 0 1-1-8c1-5 5-8 9-7 3 .5 5 3 5 6a4.500 4.500 0 0 1 1 9z" fill="#b5b5b5" stroke="#222" strokeWidth="1.300" />
    </svg>
  );
}

function MonitorTray() {
  return (
    <svg width="24" height="26" viewBox="0 0 24 26" fill="none" stroke="#111" strokeWidth="1.300">
      <rect x="2" y="3" width="15" height="15" />
      <path d="M6 23h8M10 18v5" />
      <rect x="15" y="1" width="5" height="9" fill="#eee" />
    </svg>
  );
}

function BatteryTray() {
  return (
    <svg width="24" height="22" viewBox="0 0 24 22">
      <rect x="2" y="7" width="18" height="12" rx="1" fill="#222" />
      <rect x="20" y="10" width="2" height="6" fill="#222" />
      <path d="M9 1 5 9h4l-2 6 6-8H9l2-6z" fill="#222" stroke="#eee" />
    </svg>
  );
}

const tabs = [
  { label: 'How to', w: 89, icon: <Gecko /> },
  { label: 'Chapter', w: 90, icon: <RedBall /> },
  { label: 'Spotify', w: 87, icon: <FaSpotify size={21} color="#1f8a4c" /> },
  { label: 'Nowa k', w: 90, icon: <TabPage /> },
  { label: 'TechCrunch', w: 89, icon: null },
  { label: 'The Fu', w: 86, icon: <GreySquare /> },
  { label: 'Z', w: 89, icon: <FaSpotify size={21} color="#1ed760" />, audio: true },
  { label: 'Bookm', w: 87, icon: <File size={21} strokeWidth={1} color="#cfcfcf" /> },
  { label: 'Ustawie', w: 88, icon: <Settings size={21} strokeWidth={1} color="#bdbdbd" /> },
  { label: 'world e', w: 87, icon: <Search size={18} strokeWidth={1.5} color="#1c4f86" /> },
  { label: 'WyZsza', w: 88, icon: <FaGithub size={21} color="#48494d" /> },
  { label: '172130', w: 87, icon: <PdfIcon /> },
  { label: '172303', w: 88, icon: <PdfIcon /> },
  { label: 'Publica', w: 87, icon: <WhiteDoc /> },
  { label: 'Nowa k', w: 87, icon: <TabPage /> },
  { label: 'Login', w: 88, icon: <EuFlag /> },
];

const rows = [
  ['Date', '13/01/2025 06:21 GMT', true],
  ['Service URL', 'https://ecas.cc.cec.eu.int:7002/cas/userdata/myAccount.cgi', false],
  ['IP address', '2a03:6600:6:6b01::1001', true],
  ['Browser', 'Mozilla/5.0 AppleWebKit/537.36 Chrome/132.0.0.0 Safari/537.36 Edg/132.0.0.0', false],
];

const apps = [
  { icon: <StartIcon />, plain: true },
  { icon: <SearchIcon />, plain: true },
  { icon: <TaskViewIcon />, plain: true },
  { icon: <FolderIcon /> },
  { icon: <EdgeIcon />, active: true },
  { icon: <OutlookIcon /> },
  { icon: <StoreIcon /> },
  { icon: <ShieldIcon /> },
  { icon: <ChromeIcon /> },
  { icon: <BoxIcon /> },
  { icon: <RubyIcon /> },
  { icon: <TerminalIcon /> },
  { icon: <AstroIcon /> },
  { icon: <ThunderbirdIcon /> },
  { icon: <GithubAppIcon /> },
  { icon: <ChartIcon /> },
  { icon: <FloppyIcon /> },
  { icon: <NetworkIcon /> },
  { icon: <SysGearIcon /> },
  { icon: <GemsIcon /> },
];

export default function App() {
  return (
    <Screen>
      <GlobalStyle />
      <TabStrip>
        <StripButton $w={50}><Avatar /></StripButton>
        <StripButton $w={50}><CollectionsIcon /></StripButton>
        <StripButton $w={40}><SidebarIcon /></StripButton>
        <TabList>
          {tabs.map((t, i) => (
            <Tab key={i} $w={t.w}>
              <TabIcon>{t.icon}</TabIcon>
              {t.audio && <TabAudio><SpeakerOutline /></TabAudio>}
              <TabLabel>{t.label}</TabLabel>
            </Tab>
          ))}
          <ActiveTab>
            <TabIcon><EuFlag /></TabIcon>
            <TabLabel>D</TabLabel>
            <TabClose size={17} strokeWidth={1.5} />
          </ActiveTab>
        </TabList>
        <StripButton $w={44}><Plus size={24} strokeWidth={1.2} /></StripButton>
        <StripEnd>
          <WindowButton><Minus size={14} strokeWidth={1.3} /></WindowButton>
          <WindowButton>
            <svg width="14" height="16" viewBox="0 0 14 16" fill="none" stroke="#fff">
              <rect x="1.500" y="3.500" width="9" height="11" rx="1" />
              <path d="M4 1h7a2 2 0 0 1 2 2v9" />
            </svg>
          </WindowButton>
          <WindowButton><X size={20} strokeWidth={1} /></WindowButton>
        </StripEnd>
      </TabStrip>

      <Toolbar>
        <ToolButton><ArrowLeft size={24} strokeWidth={1.4} /></ToolButton>
        <ToolButton><RotateCw size={22} strokeWidth={1.4} /></ToolButton>
        <AddressBar>
          <LockBox><Lock size={17} strokeWidth={1.6} /></LockBox>
          <Url>
            https://
            <strong>ecas.ec.europa.eu</strong>
            /cas/userdata/ShowSsoServices.cgi
          </Url>
          <Translate>aあ</Translate>
          <Star size={22} strokeWidth={1.2} color="#c8c8c8" />
        </AddressBar>
        <ToolRight>
          <ToolButton><FavoritesIcon /></ToolButton>
          <ToolButton><ShareIcon /></ToolButton>
          <ToolButton><Ellipsis size={20} strokeWidth={1.5} /></ToolButton>
          <ToolButton $w={50}><CopilotIcon /></ToolButton>
        </ToolRight>
      </Toolbar>

      <Viewport>
        <Page>
          <CookieBanner>
            <CookieText>This website uses cookies.</CookieText>
            <a href="#learn">Click here to learn more.</a>
            <CloseMessage>
              <a href="#close">Close this message</a>
              <CloseCross width="21" height="21" viewBox="0 0 21 21" fill="none" stroke="#111" strokeWidth="2">
                <path d="M1 1l19 19M20 1 1 20" />
              </CloseCross>
            </CloseMessage>
          </CookieBanner>

          <Main>
            <SiteHeader>
              <HeaderRow>
                <Brand>
                  <BrandName>EU Login</BrandName>
                  <BrandTag>One account, many EU services</BrandTag>
                </Brand>
                <LangGroup>
                  <ContrastIcon />
                  <LangSelect>
                    English (en)
                    <LangArrow>
                      <svg width="18" height="12" viewBox="0 0 18 12" fill="none" stroke="#fff" strokeWidth="2.500">
                        <path d="M2 2l7 7 7-7" />
                      </svg>
                    </LangArrow>
                  </LangSelect>
                </LangGroup>
              </HeaderRow>
            </SiteHeader>

            <UserRow>
              szer. mgr Ryszard W. CZEKAJ SAGE HO
              <GearIcon />
            </UserRow>

            <PageTitle>Display my sessions</PageTitle>

            <Card>
              <CardHeading>Services accessed during this session</CardHeading>
              <InfoTable>
                {rows.map(([label, value, shaded]) => (
                  <InfoRow key={label} $shaded={shaded}>
                    <InfoLabel>{label}</InfoLabel>
                    <div>{value}</div>
                  </InfoRow>
                ))}
              </InfoTable>
              <ButtonRow>
                <BackButton>
                  <svg width="8" height="14" viewBox="0 0 8 14" fill="none" stroke="#fff" strokeWidth="2.600">
                    <path d="M6 2 2 7l4 5" />
                  </svg>
                  <span>My Account</span>
                </BackButton>
              </ButtonRow>
            </Card>
          </Main>

          <Footer>
            <FooterRow>
              <FooterLinks>
                <FooterLink>About EU Login</FooterLink>
                <FooterLink>Cookies</FooterLink>
                <FooterLink>Privacy Statement</FooterLink>
                <FooterLink>
                  Help
                  <ExternalIcon />
                </FooterLink>
                <FooterLink>My Account</FooterLink>
              </FooterLinks>
              <PoweredBy>
                <PoweredLabel>Powered by</PoweredLabel>
                <Commission>
                  <Flag><FlagStars /></Flag>
                  <CommissionName>European</CommissionName>
                </Commission>
              </PoweredBy>
            </FooterRow>
            <FooterRule />
          </Footer>
        </Page>
        <Scrollbar>
          <svg width="12" height="9" viewBox="0 0 12 9"><path d="M6 0l6 9H0z" fill="#8b8b8b" /></svg>
          <ScrollThumb />
          <svg width="12" height="9" viewBox="0 0 12 9"><path d="M6 9 0 0h12z" fill="#8b8b8b" /></svg>
        </Scrollbar>
        <StatusBubble>https://ecas.ec.europa.eu/cas/userdata/myAccount.cgi</StatusBubble>
      </Viewport>

      <Taskbar>
        <Weather>
          <WeatherIcon />
          <Badge>2</Badge>
        </Weather>
        <AppIcons>
          {apps.map((a, i) => (
            <AppSlot key={i} $active={a.active}>
              {a.icon}
              {!a.plain && <RunDot $active={a.active} />}
            </AppSlot>
          ))}
        </AppIcons>
        <Tray>
          <TrayIcon><ChevronUp size={22} strokeWidth={1.6} /></TrayIcon>
          <TrayIcon><CloudTray /></TrayIcon>
          <TrayIcon><Mic size={22} strokeWidth={1.5} color="#2a62b0" /></TrayIcon>
          <TrayText>POL</TrayText>
          <TrayIcon $w={38}><MonitorTray /></TrayIcon>
          <TrayIcon $w={24}><SpeakerOutline color="#333" /></TrayIcon>
          <TrayIcon $w={36}><BatteryTray /></TrayIcon>
          <Clock>
            <div>07:30</div>
            <div>13.01.2025</div>
          </Clock>
        </Tray>
      </Taskbar>
    </Screen>
  );
}
